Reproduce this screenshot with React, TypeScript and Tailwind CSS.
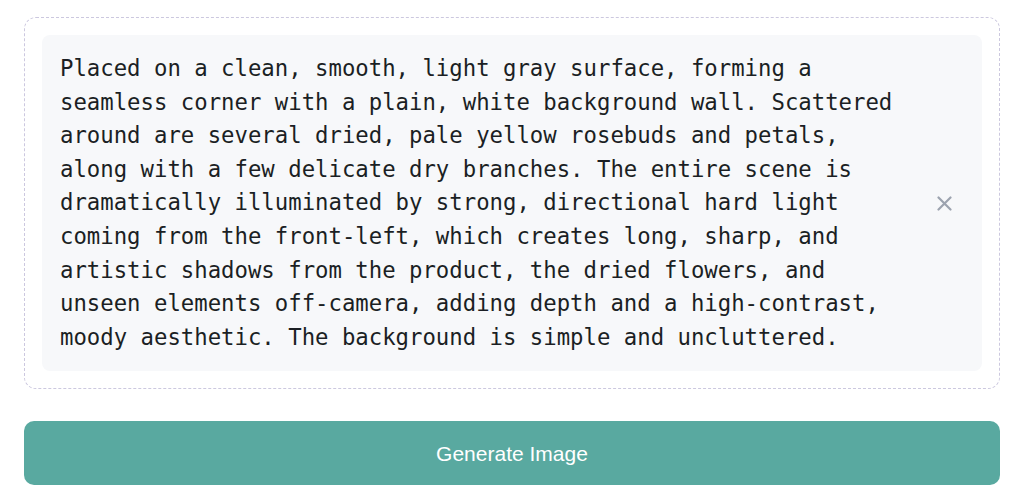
const PROMPT =
  "Placed on a clean, smooth, light gray surface, forming a seamless corner with a plain, white background wall. Scattered around are several dried, pale yellow rosebuds and petals, along with a few delicate dry branches. The entire scene is dramatically illuminated by strong, directional hard light coming from the front-left, which creates long, sharp, and artistic shadows from the product, the dried flowers, and unseen elements off-camera, adding depth and a high-contrast, moody aesthetic. The background is simple and uncluttered.";

const CloseIcon = (): JSX.Element => (
  <svg width="15" height="15" viewBox="0 0 15 15" fill="none" aria-hidden="true">
    <path d="M1.5 1.5L13.5 13.5M13.5 1.5L1.5 13.5" stroke="#9ca3af" strokeWidth="2.2" strokeLinecap="round" />
  </svg>
);

export default function App(): JSX.Element {
  return (
    <div className="min-h-[501px] w-full bg-white px-6 pt-[17px] pb-4">
      <div className="rounded-xl border border-dashed border-[#ccc8df] p-[17px]">
        <div className="flex items-center rounded-lg bg-[#f7f8fa] px-[18px] py-[17px]">
          <p className="w-[850px] text-[22.3px] leading-[33.6px] text-[#1b1f24] font-['DejaVu_Sans_Mono',monospace] break-words">
            {PROMPT}
          </p>
          <button
            type="button"
            aria-label="Clear prompt"
            className="ml-auto flex h-10 w-10 items-center justify-center"
          >
            <CloseIcon />
          </button>
        </div>
      </div>
      <button
        type="button"
        className="mt-8 flex h-16 w-full items-center justify-center rounded-[10px] bg-[#59a9a0] text-[21px] text-white font-['Liberation_Sans',Arial,sans-serif]"
      >
        Generate Image
      </button>
    </div>
  );
}
